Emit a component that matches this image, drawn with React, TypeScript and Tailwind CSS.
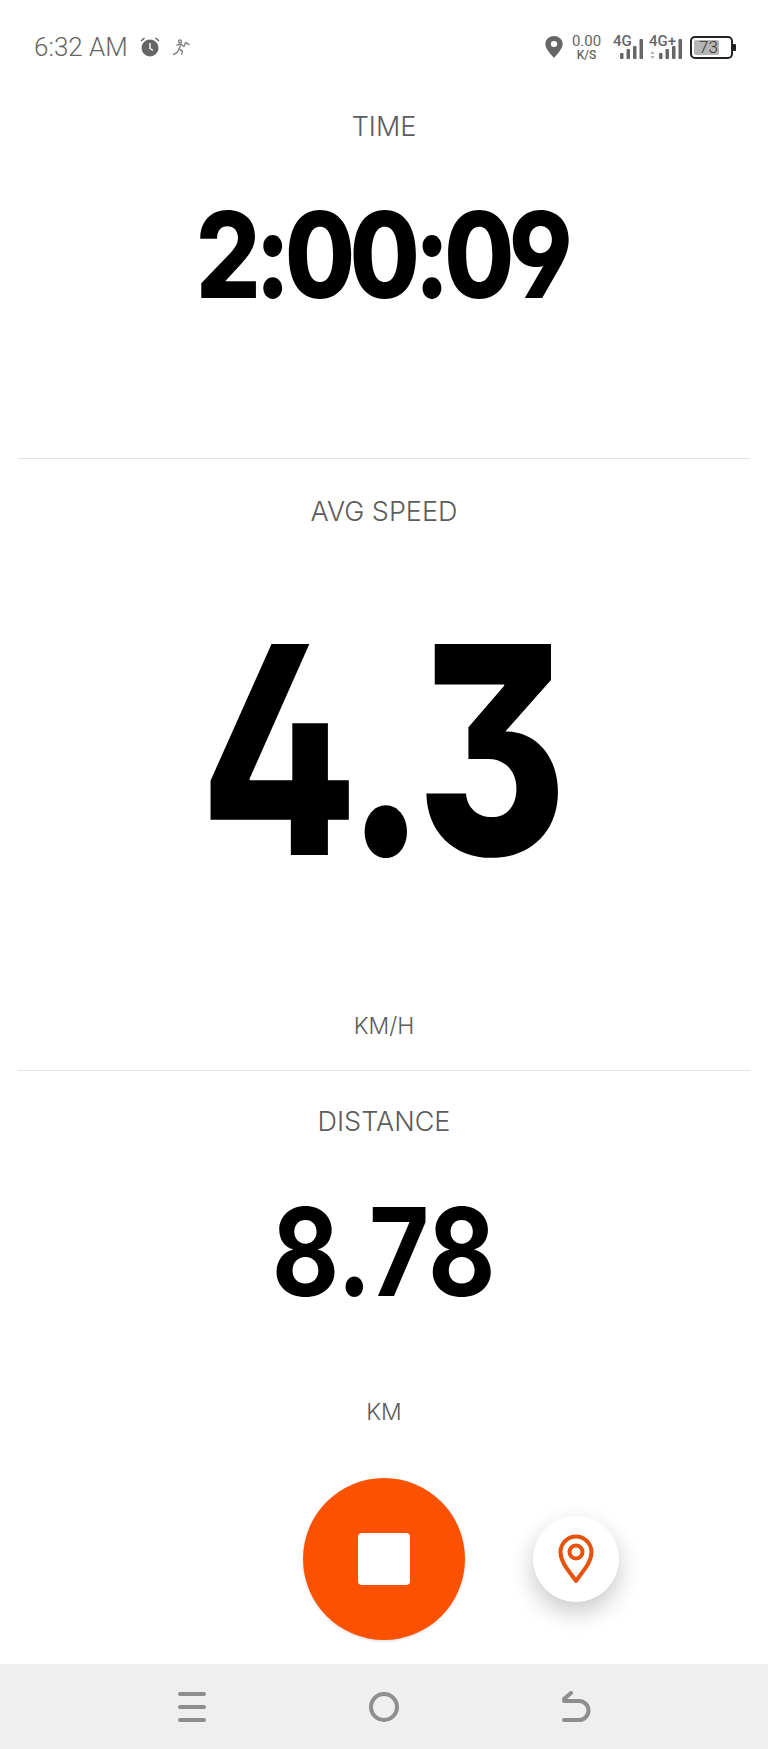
import React from "react";

const sans = "font-['Inter','Liberation_Sans',sans-serif]";

function Metric({ label, value, unit, className, valueClass }: { label: string; value: string; unit?: string; className: string; valueClass: string }) {
  return (
    <section className={`flex flex-col items-center ${className}`}>
      <div className="text-[27px] leading-[30px] font-light text-[#5c5c5c]">{label}</div>
      <div className="flex-1 flex items-center">
        <div className={`text-black [font-feature-settings:'cv02','cv04','cv09'] ${valueClass}`}>{value}</div>
      </div>
      {unit && <div className="text-[23px] leading-[28px] font-light text-[#5c5c5c]">{unit}</div>}
    </section>
  );
}

function SignalBars() {
  return (
    <svg width="23" height="20" viewBox="0 0 23 20" className="absolute right-0 bottom-0" fill="#666">
      <rect x="0" y="14" width="3.500" height="6" rx="1" />
      <rect x="6.500" y="10" width="3.500" height="10" rx="1" />
      <rect x="13" y="7" width="3.500" height="13" rx="1" />
      <rect x="19.500" y="0" width="3.500" height="20" rx="1" />
    </svg>
  );
}

function StatusBar() {
  return (
    <header className="h-[92px] flex items-center justify-between pt-[2px] pl-[34px] pr-[32px] text-[#666]">
      <div className="flex items-center">
        <span className="font-['Roboto',sans-serif] text-[26px] font-light">6:32 AM</span>
        <svg width="22" height="22" viewBox="0 0 22 22" className="ml-[11px]">
          <circle cx="11" cy="12" r="8.500" fill="#666" />
          <path d="M11 7v5.500l3 2" stroke="#fff" strokeWidth="1.400" fill="none" />
          <path d="M2 5l3.500-3M20 5l-3.500-3" stroke="#666" strokeWidth="1.600" />
        </svg>
        {/* running figure */}
        <svg width="18" height="17" viewBox="0 0 18 17" className="ml-[12px]" fill="none" stroke="#8a8a8a" strokeWidth="1.500" strokeLinecap="round" strokeLinejoin="round">
          <circle cx="7" cy="2.500" r="1.500" />
          <path d="M4 6l4-1 3 2.500 1.500-4 3.500 2" />
          <path d="M8 5.500L6 10l3.500 2-1 3" />
          <path d="M6 10l-2 3.500-3.500 2" />
        </svg>
      </div>
      <div className="flex items-center">
        <svg width="18" height="22" viewBox="0 0 18 24" preserveAspectRatio="none">
          <path fillRule="evenodd" fill="#666" d="M9 0a8.700 8.700 0 0 1 8.700 8.700C17.700 14 12 20 9 24 6 20 .3 14 .3 8.700A8.700 8.700 0 0 1 9 0zm0 5.500a3.200 3.200 0 1 0 0 6.400 3.200 3.200 0 0 0 0-6.400z" />
        </svg>
        <div className="ml-[10px] w-[27px] flex flex-col items-center font-['Roboto',sans-serif] leading-none">
          <span className="text-[15px]">0.00</span>
          <span className="text-[12px] font-medium">K/S</span>
        </div>
        <div className="relative ml-[13px] w-[30px] h-[24px]">
          <span className="absolute left-0 -top-[5px] text-[15px] font-medium font-['Roboto',sans-serif]">4G</span>
          <SignalBars />
        </div>
        <div className="relative ml-[6px] w-[33px] h-[24px]">
          <span className="absolute left-0 -top-[5px] text-[15px] font-medium font-['Roboto',sans-serif]">4G+</span>
          <svg width="5" height="8" viewBox="0 0 5 8" fill="#bbb" className="absolute left-[1px] bottom-0">
            <path d="M2.500 0L5 3H0zM2.500 8L0 5h5z" />
          </svg>
          <SignalBars />
        </div>
        <div className="ml-[8px] flex items-center">
          <div className="w-[43px] h-[23px] rounded-[5px] border-2 border-[#222] p-[2px] flex">
            <div className="w-[25px] bg-[#b5b5b5] rounded-[2px] flex items-center pl-[5px] text-[17px] leading-none font-light text-[#333] font-['Roboto',sans-serif] whitespace-nowrap">73</div>
          </div>
          <div className="w-[3px] h-[7px] bg-[#222] rounded-r-[1px]" />
        </div>
      </div>
    </header>
  );
}

function Divider() {
  return <div className="mx-[18px] h-px bg-[#e2e2e2]" />;
}

function ActionRow() {
  return (
    <div className="h-[208px] grid grid-cols-[1fr_162px_1fr] items-center pb-[2px]">
      <div />
      <button className="size-[162px] rounded-full bg-[#fc5200] flex items-center justify-center shadow-[0_1px_3px_rgba(0,0,0,0.15)]">
        <span className="size-[52px] rounded-[4px] bg-white" />
      </button>
      <div className="pl-[68px]">
        <button className="size-[86px] rounded-full bg-white flex items-center justify-center shadow-[0_10px_24px_rgba(0,0,0,0.22)]">
          <svg width="36" height="50" viewBox="0 0 36 50" fill="none" stroke="#e5530f" strokeWidth="4">
            <path d="M18 47C12 38 2.500 29 2.500 18a15.500 15.500 0 0 1 31 0C33.500 29 24 38 18 47z" strokeLinejoin="round" />
            <circle cx="18" cy="18" r="6.500" />
          </svg>
        </button>
      </div>
    </div>
  );
}

function NavBar() {
  return (
    <nav className="h-[85px] bg-[#efefef] flex items-center justify-between pl-[178px] pr-[177px]">
      <svg width="28" height="30" viewBox="0 0 28 30" stroke="#8e8e8e" strokeWidth="4" strokeLinecap="round">
        <path d="M2 2h24M2 15h24M2 28h24" />
      </svg>
      <svg width="30" height="30" viewBox="0 0 30 30" fill="none" stroke="#8e8e8e" strokeWidth="4">
        <circle cx="15" cy="15" r="13" />
      </svg>
      <svg width="29" height="32" viewBox="0 0 29 32" fill="none" stroke="#8e8e8e" strokeWidth="4" strokeLinecap="round" strokeLinejoin="round">
        <path d="M2 29h15a9.500 9.500 0 0 0 0-19H2M9 2L2 8" />
      </svg>
    </nav>
  );
}

export default function App() {
  return (
    <div className={`w-[768px] h-[1749px] bg-white flex flex-col ${sans}`}>
      <StatusBar />
      <Metric label="TIME" value="2:00:09" className="h-[366px] pt-[20px] pb-[91px]" valueClass="font-extrabold scale-x-[0.85] text-[120px] leading-none tracking-[-7px] -ml-[6px]" />
      <Divider />
      <Metric label="AVG SPEED" value="4.3" unit="KM/H" className="h-[611px] pt-[38px] pb-[30px]" valueClass="font-extrabold scale-x-[0.79] text-[290px] leading-none tracking-[-6px] mb-[40px] -ml-[6px]" />
      <Divider />
      <Metric label="DISTANCE" value="8.78" unit="KM" className="h-[385px] pt-[36px] pb-[30px]" valueClass="font-bold scale-x-[0.85] text-[122px] leading-none mb-[32px]" />
      <ActionRow />
      <NavBar />
    </div>
  );
}
